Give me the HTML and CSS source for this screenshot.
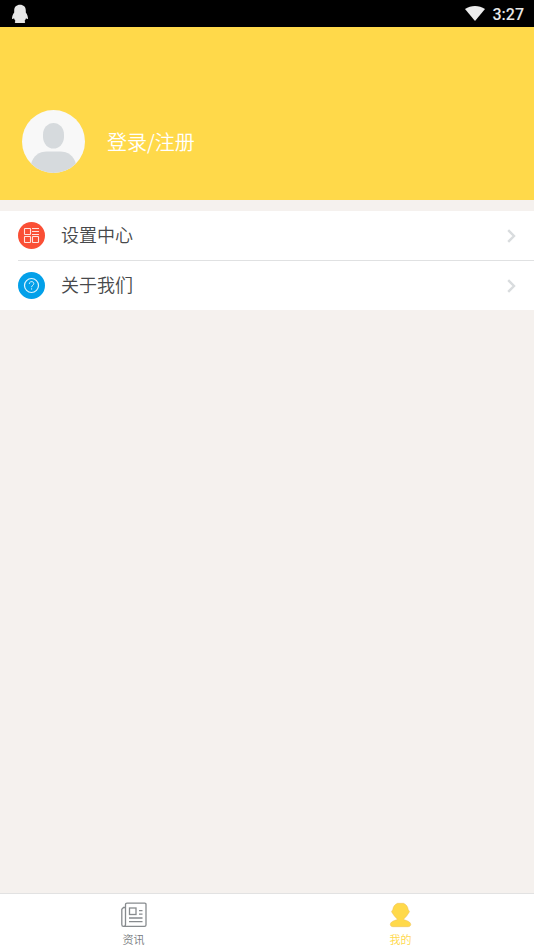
FILE: index.html
```html
<!DOCTYPE html>
<html lang="zh-CN">
<head>
  <meta charset="utf-8">
  <meta name="viewport" content="width=device-width, initial-scale=1">
  <title>我的</title>
  <link rel="stylesheet" href="styles.css">
</head>
<body>
  <div class="status-bar">
    <svg class="status-notice" width="18" height="20" viewBox="0 0 18 20" aria-hidden="true">
      <path fill="#e6e6e6" d="M9 .8C5.500.8 3.200 3 3.200 6.500V8.500C2 10 1 12.500 1 14.500c.2 1 1.200.6 2-.2.300 1 .8 1.900 1.500 2.600-.9.600-.9 1.900.1 2.100h8.800c1-.2 1-1.500.1-2.100.7-.7 1.200-1.600 1.500-2.600.8.800 1.800 1.200 2 .2C17 12.500 16 10 14.800 8.500V6.500C14.800 3 12.500.8 9 .8z"/>
    </svg>
    <div class="status-info">
      <svg width="20" height="16" viewBox="0 0 20 16" aria-hidden="true">
        <path fill="#ececec" d="M0 3C6-1 14-1 20 3L10 15z"/>
      </svg>
      <time class="clock">3:27</time>
    </div>
  </div>

  <header class="profile">
    <a class="login" href="#login">
      <svg class="avatar" width="63" height="63" viewBox="0 0 63 63" aria-hidden="true">
        <defs><clipPath id="avatar-circle"><circle cx="31.500" cy="31.500" r="31.500"/></clipPath></defs>
        <g clip-path="url(#avatar-circle)">
          <rect width="63" height="63" fill="#f8f8f8"/>
          <rect x="21" y="13" width="21" height="25.500" rx="10.500" ry="11.500" fill="#d6dadd"/>
          <path fill="#d6dadd" d="M9 63V54C11 46 17 41.500 25 41.500H38C46 41.500 52 46 54 54V63z"/>
        </g>
      </svg>
      <span>登录/注册</span>
    </a>
  </header>

  <main class="content">
    <nav class="menu" aria-label="菜单">
      <a class="menu-item" href="#settings">
        <svg width="27" height="27" viewBox="0 0 27 27" aria-hidden="true">
          <circle cx="13.500" cy="13.500" r="13.500" fill="#fa4f35"/>
          <g fill="none" stroke="#ffe3de" stroke-width="1.100">
            <rect x="6.500" y="6.500" width="6" height="6" rx=".5"/>
            <rect x="6.500" y="14.500" width="6" height="6" rx=".5"/>
            <rect x="14.500" y="14.500" width="6" height="6" rx=".5"/>
            <path d="M14 6.500h7M14 9.500h7M14 12.500h7"/>
          </g>
        </svg>
        <span class="menu-label">设置中心</span>
        <svg class="chevron" width="9" height="14" viewBox="0 0 9 14" aria-hidden="true"><path d="M1.200 1.200L7 7L1.200 12.800"/></svg>
      </a>
      <a class="menu-item" href="#about">
        <svg width="27" height="27" viewBox="0 0 27 27" aria-hidden="true">
          <circle cx="13.500" cy="13.500" r="13.500" fill="#03a0e9"/>
          <g fill="none" stroke="#e0f4fd" stroke-width="1.200">
            <circle cx="13.500" cy="13.500" r="7"/>
            <path stroke-width="1" d="M11.300 11.900c0-3 4.500-3 4.500-.3 0 1.600-2.200 1.700-2.200 3.600M13.600 16.300v1.300"/>
          </g>
        </svg>
        <span class="menu-label">关于我们</span>
        <svg class="chevron" width="9" height="14" viewBox="0 0 9 14" aria-hidden="true"><path d="M1.200 1.200L7 7L1.200 12.800"/></svg>
      </a>
    </nav>
  </main>

  <nav class="tabs" aria-label="主导航">
    <a class="tab" href="#news">
      <svg width="26" height="26" viewBox="0 0 26 26" aria-hidden="true">
        <g fill="none" stroke="#878b8e" stroke-width="1.300">
          <path d="M4.500 5.500H2.500L.8 7.300V22.500Q.8 24.400 2.500 24.400H23.500Q25 24.400 25 23V2.500Q25 1.200 23.700 1.200H6Q4.500 1.200 4.500 2.500V22.500Q4.500 24.400 2.500 24.400"/>
          <rect x="8.500" y="6" width="6.500" height="6.500"/>
          <path d="M18 8.700h3.500M18 12.200h3.500M8 16h13.500M8 19.600h13.500"/>
        </g>
      </svg>
      <span>资讯</span>
    </a>
    <a class="tab tab-active" href="#mine" aria-current="page">
      <svg width="26" height="26" viewBox="0 0 26 26" aria-hidden="true">
        <path fill="#ffd94a" stroke="#edbd58" stroke-width=".5" d="M9.500 1.300H15.500C18 2.300 19.800 4.500 20.200 7.500L21.500 9.700 20 12C18.500 14.500 17 15.500 15.800 17V17.800C19.500 18.500 22.500 20 22.800 22.500 22.500 24 21.500 24.700 20 24.700H5C3.500 24.700 2.500 24 2.300 22.500 2.500 20 5.500 18.500 9.200 17.800V17C8 15.500 6.500 14.500 5 12L3.500 9.700 4.800 7.500C5.200 4.500 7 2.300 9.500 1.300z"/>
      </svg>
      <span>我的</span>
    </a>
  </nav>
</body>
</html>
```
FILE: styles.css
```css
* {
  box-sizing: border-box;
}

body {
  display: flex;
  flex-direction: column;
  min-height: 100vh;
  margin: 0;
  background: #f5f1ee;
  color: #47494b;
  font-family: "Noto Sans CJK SC", sans-serif;
  font-weight: 350;
}

a {
  color: inherit;
  text-decoration: none;
}

svg {
  display: block;
  flex: none;
}

.status-bar {
  display: flex;
  align-items: center;
  justify-content: space-between;
  height: 27px;
  padding: 0 10px 0 11px;
  background: #000;
}

.status-info {
  display: flex;
  align-items: center;
  gap: 8px;
}

.clock {
  color: #e8e8e8;
  font: 500 16px/20px Roboto, sans-serif;
  padding-top: 2px;
}

.profile {
  padding: 83px 22px 27px;
  background: #ffd94a;
}

.login {
  display: flex;
  align-items: center;
  gap: 22px;
  color: #fff;
  font-size: 20px;
  line-height: 30px;
}

.content {
  flex: 1;
  padding-top: 11px;
}

.menu {
  background: #fff;
}

.menu-item {
  display: flex;
  align-items: center;
  height: 49px;
  margin-left: 18px;
  padding-right: 18px;
}

.menu-item + .menu-item {
  height: 50px;
  border-top: 1px solid #e0e1e2;
}

.menu-label {
  flex: 1;
  margin-left: 16px;
  padding-bottom: 4px;
  font-size: 18px;
  line-height: 26px;
}

.chevron {
  fill: none;
  stroke: #d9dcde;
  stroke-width: 2.4;
}

.tabs {
  display: flex;
  border-top: 1px solid #e2e2e2;
  background: #fff;
}

.tab {
  display: flex;
  flex: 1;
  flex-direction: column;
  align-items: center;
  padding: 8px 0 1px;
  gap: 3px;
  color: #777b7e;
  font-size: 11px;
  line-height: 17px;
}

.tab-active {
  color: #ffd94a;
}
```
